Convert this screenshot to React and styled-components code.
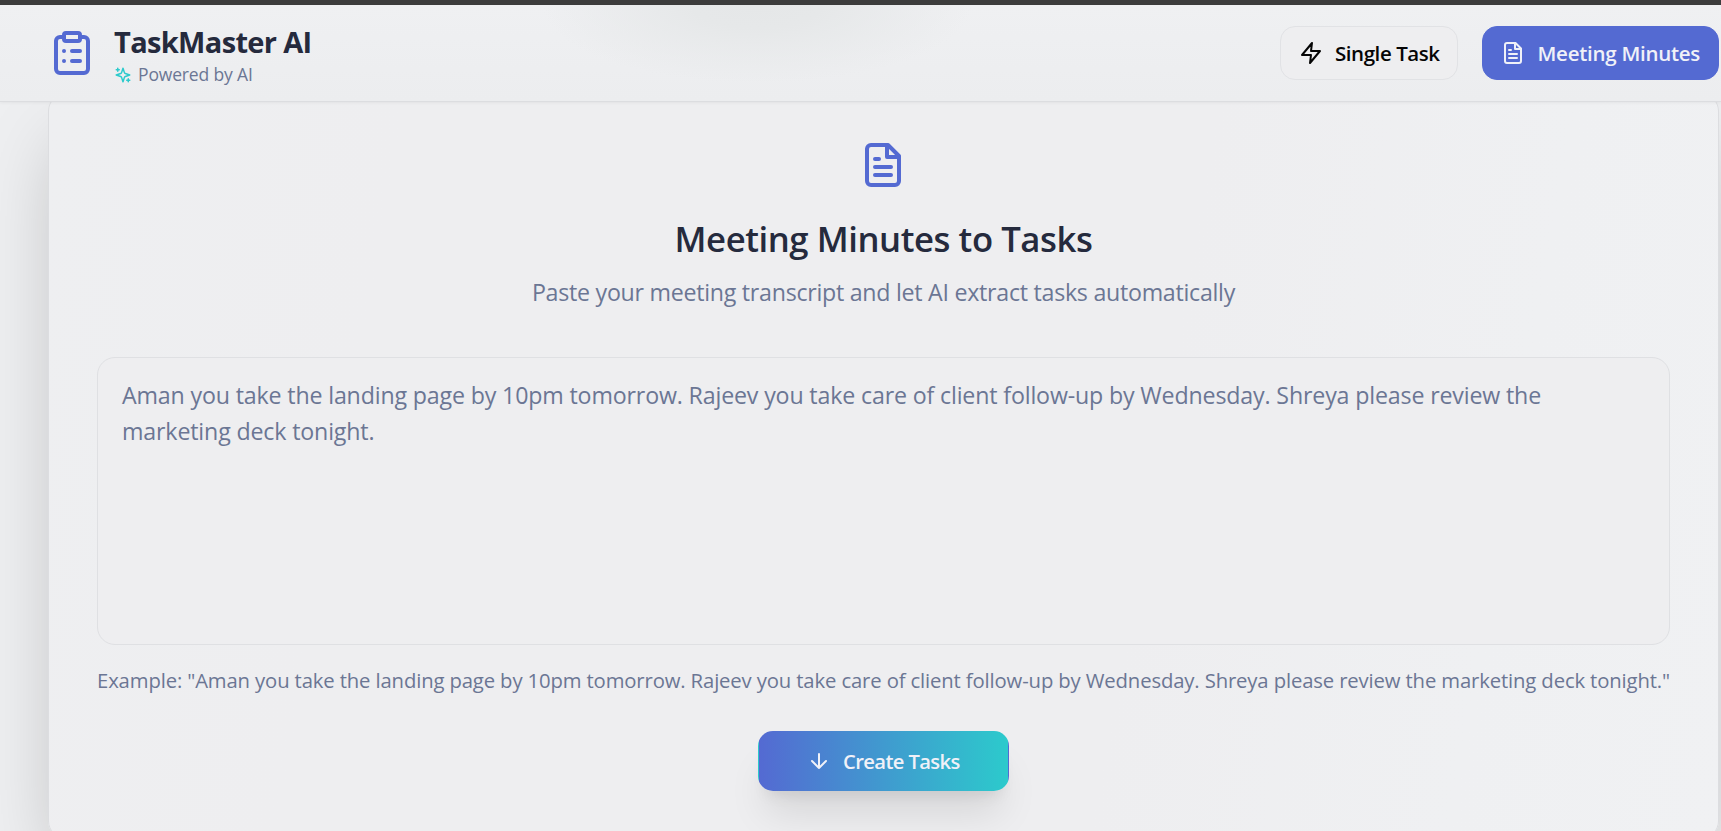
import React from 'react';
import styled, { createGlobalStyle, css } from 'styled-components';

const GlobalStyle = createGlobalStyle`
  *, *::before, *::after { box-sizing: border-box; }
  html, body { margin: 0; height: 100%; overflow: hidden; }
  body {
    background: #eeeff1;
    font-family: "Segoe UI", "Open Sans", "Noto Sans", sans-serif;
    color: #252a3d;
  }
  h1, h2, p { margin: 0; }
`;

const Page = styled.div`
  display: flex;
  flex-direction: column;
  height: 831px;
  overflow: hidden;
`;

const WindowEdge = styled.div`
  flex: none;
  height: 5px;
  background: #3c3c3c;
`;

const Header = styled.header`
  position: relative;
  z-index: 2;
  flex: none;
  display: flex;
  align-items: flex-start;
  justify-content: space-between;
  height: 97px;
  padding: 21px 2px 0 48px;
  border-bottom: 1px solid #dcdde0;
  background:
    radial-gradient(ellipse 215px 78px at 757px 0, #e5e7e8 0%, #e6e8e9 30%, rgba(234, 235, 237, 0) 100%),
    linear-gradient(#eff0f2, #ecedef);
  box-shadow: 0 1px 3px rgba(0, 0, 0, 0.05);
`;

const Brand = styled.div`
  display: flex;
  gap: 18px;
  padding-top: 3px;
  color: #546ad2;
`;

const BrandText = styled.div`
  display: flex;
  flex-direction: column;
  margin-top: -6px;
`;

const BrandName = styled.h1`
  font-size: 29px;
  line-height: 38px;
  font-weight: 700;
  letter-spacing: -0.65px;
  color: #252a3d;
  white-space: nowrap;
`;

const Tagline = styled.p`
  display: flex;
  align-items: center;
  gap: 6px;
  height: 27px;
  font-size: 17.5px;
  line-height: 27px;
  letter-spacing: -0.15px;
  color: #6b7694;
  white-space: nowrap;

  svg { color: #2ccacc; }
`;

const Nav = styled.nav`
  display: flex;
  gap: 24px;
`;

const variants = {
  outline: css`
    width: 178px;
    height: 54px;
    padding-left: 18px;
    border-color: #e1e2e5;
    background: #eeeef0;
    color: #050505;
    font-size: 20.5px;
    letter-spacing: -0.44px;
  `,
  primary: css`
    width: 237px;
    height: 54px;
    padding-left: 18px;
    gap: 12.5px;
    background: #546ad2;
    border-color: #546ad2;
    color: #f0f1f8;
    font-size: 20.5px;
    letter-spacing: -0.27px;
  `,
  gradient: css`
    width: 251px;
    height: 60px;
    padding-left: 48px;
    border-color: transparent;
    background: linear-gradient(to right, #546ad2, #2ccacc);
    color: #f0f1f8;
    font-size: 20.2px;
    letter-spacing: -0.61px;
    box-shadow: 0 30px 38px -8px rgba(0, 0, 0, 0.1), 0 12px 15px -9px rgba(0, 0, 0, 0.1);
  `,
};

const Button = styled.button`
  display: flex;
  align-items: center;
  gap: 12px;
  padding: 0;
  border: 1px solid;
  border-radius: 15px;
  font-family: inherit;
  font-weight: 600;
  line-height: 30px;
  white-space: nowrap;
  ${({ $variant }) => variants[$variant]}
`;

const Main = styled.main`
  flex: none;
  padding: 0 2px 0 48px;
  margin-top: -9px;
`;

const Card = styled.section`
  display: flex;
  flex-direction: column;
  align-items: center;
  height: 746px;
  padding: 47px 48px 0;
  border: 1px solid #dcdde0;
  border-radius: 18px;
  background: linear-gradient(100deg, #eeeff1 0%, #eeeef0 20%, #eeeef0 65%, #eff0f2 85%, #f0f1f3 100%);
  box-shadow: 0 37px 75px -18px rgba(0, 0, 0, 0.25);
`;

const CardTitle = styled.h2`
  margin-top: 26px;
  font-size: 34.7px;
  line-height: 48px;
  font-weight: 600;
  letter-spacing: -0.43px;
`;

const CardText = styled.p`
  margin-top: 11px;
  font-size: 23.2px;
  line-height: 36px;
  letter-spacing: -0.265px;
  color: #6b7694;
`;

const Transcript = styled.textarea`
  flex: none;
  width: 100%;
  height: 288px;
  margin-top: 47px;
  padding: 19px 24px;
  border: 1px solid #dfe0e3;
  border-radius: 18px;
  outline: none;
  resize: none;
  background: #eeeef0;
  font-family: inherit;
  font-size: 23.2px;
  line-height: 36px;
  letter-spacing: -0.155px;

  &::placeholder { color: #6b7694; opacity: 1; }
`;

const Example = styled.p`
  align-self: flex-start;
  margin: 20px 0 35px;
  font-size: 20.3px;
  line-height: 31px;
  letter-spacing: -0.137px;
  color: #6b7694;
  white-space: nowrap;
`;

const Svg = styled.svg`
  flex: none;
  display: block;
`;

function Icon({ size, children }) {
  return (
    <Svg width={size} height={size} viewBox="0 0 24 24" fill="none" stroke="currentColor"
      strokeWidth="2" strokeLinecap="round" strokeLinejoin="round" aria-hidden="true">
      {children}
    </Svg>
  );
}

const ClipboardIcon = ({ size }) => (
  <Icon size={size}>
    <rect x="8" y="2" width="8" height="4" rx="1" />
    <path d="M16 4h2a2 2 0 0 1 2 2v14a2 2 0 0 1-2 2H6a2 2 0 0 1-2-2V6a2 2 0 0 1 2-2h2" />
    <path d="M12 11h4M12 16h4M8 11h.01M8 16h.01" />
  </Icon>
);

const SparklesIcon = ({ size }) => (
  <Icon size={size}>
    <path d="m12 3-1.912 5.813a2 2 0 0 1-1.275 1.275L3 12l5.813 1.912a2 2 0 0 1 1.275 1.275L12 21l1.912-5.813a2 2 0 0 1 1.275-1.275L21 12l-5.813-1.912a2 2 0 0 1-1.275-1.275L12 3Z" />
    <path d="M5 3v4M19 17v4M3 5h4M17 19h4" />
  </Icon>
);

const ZapIcon = ({ size }) => (
  <Icon size={size}>
    <polygon points="13 2 3 14 12 14 11 22 21 10 12 10 13 2" />
  </Icon>
);

const FileIcon = ({ size }) => (
  <Icon size={size}>
    <path d="M14.5 2H6a2 2 0 0 0-2 2v16a2 2 0 0 0 2 2h12a2 2 0 0 0 2-2V7.5L14.5 2z" />
    <polyline points="14 2 14 8 20 8" />
    <path d="M16 13H8M16 17H8M10 9H8" />
  </Icon>
);

const ArrowDownIcon = ({ size }) => (
  <Icon size={size}>
    <path d="M12 5v14M19 12l-7 7-7-7" />
  </Icon>
);

const FileBadge = styled.div`
  margin-right: 1px;
  color: #546ad2;
`;

const SAMPLE =
  'Aman you take the landing page by 10pm tomorrow. Rajeev you take care of client follow-up by Wednesday. Shreya please review the marketing deck tonight.';

export default function App() {
  return (
    <Page>
      <GlobalStyle />
      <WindowEdge />
      <Header>
        <Brand>
          <ClipboardIcon size={48} />
          <BrandText>
            <BrandName>TaskMaster AI</BrandName>
            <Tagline><SparklesIcon size={18} />Powered by AI</Tagline>
          </BrandText>
        </Brand>
        <Nav>
          <Button $variant="outline"><ZapIcon size={24} />Single Task</Button>
          <Button $variant="primary"><FileIcon size={24} />Meeting Minutes</Button>
        </Nav>
      </Header>
      <Main>
        <Card>
          <FileBadge><FileIcon size={48} /></FileBadge>
          <CardTitle>Meeting Minutes to Tasks</CardTitle>
          <CardText>Paste your meeting transcript and let AI extract tasks automatically</CardText>
          <Transcript placeholder={SAMPLE} />
          <Example>{`Example: "${SAMPLE}"`}</Example>
          <Button $variant="gradient"><ArrowDownIcon size={24} />Create Tasks</Button>
        </Card>
      </Main>
    </Page>
  );
}
